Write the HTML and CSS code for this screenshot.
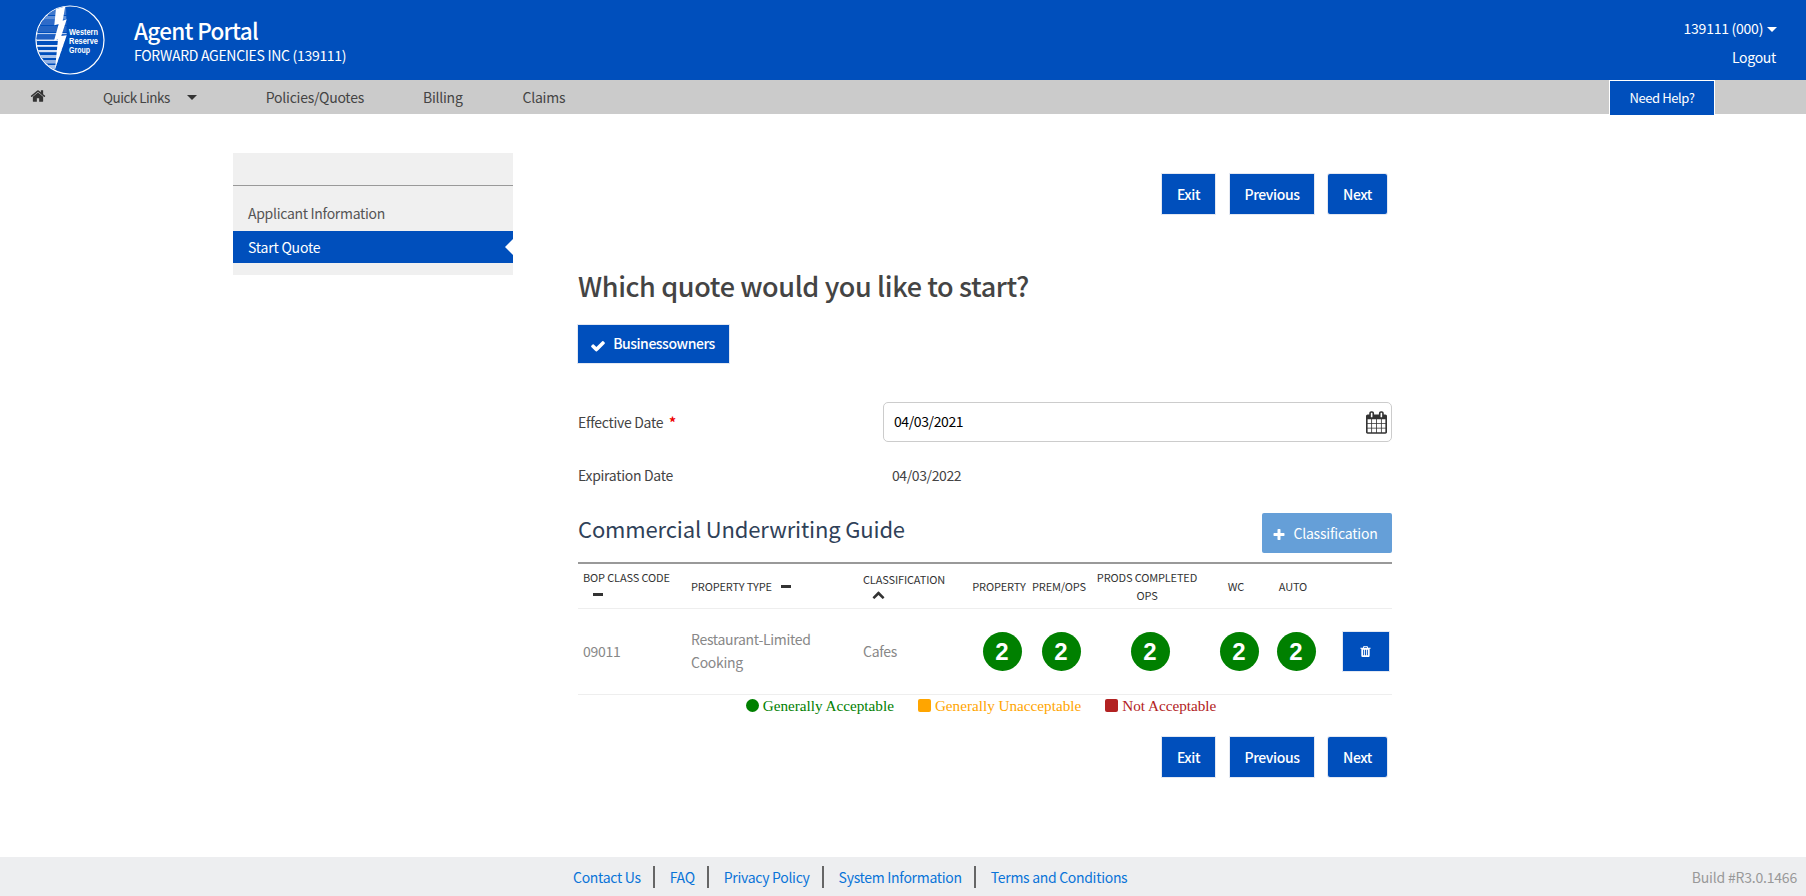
FILE: index.html
```html
<!DOCTYPE html>
<html lang="en">
<head>
<meta charset="utf-8">
<title>Agent Portal</title>
<link rel="stylesheet" href="styles.css">
</head>
<body>
<header class="top">
  <svg class="logo" viewBox="0 0 70 70" aria-hidden="true">
    <defs>
      <clipPath id="logoClip"><circle cx="35" cy="35" r="33.7"/></clipPath>
      <clipPath id="stripeClip"><polygon points="0,0 31,0 31.7,30 20,64.3 0,70"/></clipPath>
    </defs>
    <circle cx="35" cy="35" r="34" fill="#004fbc" stroke="#fff" stroke-width="1.2"/>
    <g clip-path="url(#logoClip)">
      <g clip-path="url(#stripeClip)">
        <rect x="0" y="2" width="32" height="8" fill="#3f78cc"/>
        <rect x="0" y="11" width="32" height="3.500" fill="#5f8fd8"/>
        <rect x="0" y="15" width="32" height="5" fill="#2f6bc8"/>
        <rect x="0" y="21" width="32" height="6" fill="#2565c4"/>
        <rect x="0" y="28" width="32" height="1.200" fill="#b9cdee"/>
        <rect x="0" y="30" width="32" height="4" fill="#1f5fc2"/>
        <rect x="0" y="34.500" width="32" height="1.500" fill="#dfe8f7"/>
        <rect x="0" y="40" width="32" height="1.800" fill="#e6edf9"/>
        <rect x="0" y="45" width="32" height="2.200" fill="#d5e1f5"/>
        <rect x="0" y="50" width="32" height="3" fill="#a9c3ea"/>
        <rect x="0" y="55" width="32" height="3.500" fill="#8fb0e4"/>
        <rect x="0" y="60" width="32" height="4" fill="#a9c3ea"/>
      </g>
      <polygon points="21,3.300 30.300,1 27.700,15.700 31.700,14.300 26.300,31 31.700,30.300 20,64.300 23,34.300 19,35.700 23.700,19 19.300,20.300" fill="#fff"/>
    </g>
    <text class="logo-text" x="34" y="30" textLength="29" lengthAdjust="spacingAndGlyphs">Western</text>
    <text class="logo-text" x="34" y="39" textLength="29" lengthAdjust="spacingAndGlyphs">Reserve</text>
    <text class="logo-text" x="34" y="48" textLength="21" lengthAdjust="spacingAndGlyphs">Group</text>
  </svg>
  <div class="brand">
    <div class="brand-title">Agent Portal</div>
    <div class="brand-sub">FORWARD AGENCIES INC (139111)</div>
  </div>
  <div class="account">
    <div class="account-id">139111 (000) <span class="caret caret-white"></span></div>
    <div class="logout">Logout</div>
  </div>
</header>

<nav class="nav">
  <svg class="home" viewBox="0 0 1792 1792" aria-hidden="true"><path d="M1472 992v480q0 26-19 45t-45 19h-384v-384h-256v384h-384q-26 0-45-19t-19-45v-480q0-1 .5-3t.5-3l575-474 575 474q1 2 1 6zm223-69l-62 74q-8 9-21 11h-3q-13 0-21-7l-692-577-692 577q-12 8-24 7-13-2-21-11l-62-74q-8-10-7-23.5t11-21.5l719-599q32-26 76-26t76 26l244 204v-195q0-14 9-23t23-9h192q14 0 23 9t9 23v408l219 182q10 8 11 21.5t-7 23.5z"/></svg>
  <span class="nav-quick">Quick Links</span>
  <span class="caret caret-dark"></span>
  <span class="nav-policies">Policies/Quotes</span>
  <span class="nav-billing">Billing</span>
  <span class="nav-claims">Claims</span>
  <span class="help">Need Help?</span>
</nav>

<div class="page">
  <aside class="side">
    <div class="side-head"></div>
    <div class="side-item">Applicant Information</div>
    <div class="side-active">Start Quote</div>
  </aside>

  <main class="main">
    <div class="actions">
      <button class="btn btn-exit">Exit</button>
      <button class="btn btn-prev">Previous</button>
      <button class="btn btn-next">Next</button>
    </div>

    <h1 class="title">Which quote would you like to start?</h1>

    <button class="btn btn-check">
      <svg class="ico-check" viewBox="0 0 1792 1792" aria-hidden="true"><path d="M1671 566q0 40-28 68l-724 724-136 136q-28 28-68 28t-68-28l-136-136-362-362q-28-28-28-68t28-68l136-136q28-28 68-28t68 28l294 295 656-657q28-28 68-28t68 28l136 136q28 28 28 68z"/></svg>
      Businessowners
    </button>

    <div class="field field-eff">
      <div class="field-label">Effective Date <span class="req">*</span></div>
      <div class="date-input">
        <span>04/03/2021</span>
        <svg class="ico-cal" viewBox="0 0 1664 1792" aria-hidden="true"><path d="M128 1664h288v-288h-288v288zm352 0h320v-288h-320v288zm-352-352h288v-320h-288v320zm352 0h320v-320h-320v320zm-352-384h288v-288h-288v288zm736 736h320v-288h-320v288zm-384-736h320v-288h-320v288zm768 736h288v-288h-288v288zm-384-352h320v-320h-320v320zm-352-864v-288q0-13-9.500-22.500t-22.500-9.500h-64q-13 0-22.500 9.500t-9.500 22.500v288q0 13 9.500 22.500t22.500 9.500h64q13 0 22.500-9.500t9.500-22.500zm736 864h288v-320h-288v320zm-384-384h320v-288h-320v288zm384 0h288v-288h-288v288zm32-480v-288q0-13-9.500-22.500t-22.500-9.500h-64q-13 0-22.500 9.500t-9.500 22.500v288q0 13 9.500 22.500t22.500 9.500h64q13 0 22.500-9.500t9.500-22.500zm384-64v1280q0 52-38 90t-90 38h-1408q-52 0-90-38t-38-90v-1280q0-52 38-90t90-38h128v-96q0-66 47-113t113-47h64q66 0 113 47t47 113v96h384v-96q0-66 47-113t113-47h64q66 0 113 47t47 113v96h128q52 0 90 38t38 90z"/></svg>
      </div>
    </div>

    <div class="field field-exp">
      <div class="field-label">Expiration Date</div>
      <div class="field-value">04/03/2022</div>
    </div>

    <div class="guide-head">
      <h2 class="guide-title">Commercial Underwriting Guide</h2>
      <button class="btn btn-class">
        <svg class="ico-plus" viewBox="0 0 1792 1792" aria-hidden="true"><path d="M1600 736v192q0 40-28 68t-68 28h-416v416q0 40-28 68t-68 28h-192q-40 0-68-28t-28-68v-416h-416q-40 0-68-28t-28-68v-192q0-40 28-68t68-28h416v-416q0-40 28-68t68-28h192q40 0 68 28t28 68v416h416q40 0 68 28t28 68z"/></svg>
        Classification
      </button>
    </div>

    <table class="grid">
      <colgroup>
        <col class="c1"><col class="c2"><col class="c3"><col class="c4"><col class="c5"><col class="c6"><col class="c7"><col class="c8"><col class="c9">
      </colgroup>
      <thead>
        <tr>
          <th class="left">BOP CLASS CODE<br><span class="dash dash-under"></span></th>
          <th class="left">PROPERTY TYPE <span class="dash dash-inline"></span></th>
          <th class="left">CLASSIFICATION<br><svg class="ico-chev" viewBox="0 0 1792 1792" aria-hidden="true"><path d="M1683 1331l-166 165q-19 19-45 19t-45-19l-531-531-531 531q-19 19-45 19t-45-19l-166-165q-19-19-19-45.500t19-45.500l742-741q19-19 45-19t45 19l742 741q19 19 19 45.500t-19 45.500z"/></svg></th>
          <th>PROPERTY</th>
          <th class="th-prem">PREM/OPS</th>
          <th>PRODS COMPLETED OPS</th>
          <th>WC</th>
          <th>AUTO</th>
          <th></th>
        </tr>
      </thead>
      <tbody>
        <tr>
          <td class="left">09011</td>
          <td class="left">Restaurant-Limited Cooking</td>
          <td class="left">Cafes</td>
          <td><span class="dot">2</span></td>
          <td><span class="dot">2</span></td>
          <td><span class="dot">2</span></td>
          <td><span class="dot">2</span></td>
          <td><span class="dot">2</span></td>
          <td class="trash-cell">
            <button class="btn btn-trash" aria-label="Delete">
              <svg class="ico-trash" viewBox="0 0 1408 1792" aria-hidden="true"><path fill="#fff" d="M512 1376v-704q0-14-9-23t-23-9h-64q-14 0-23 9t-9 23v704q0 14 9 23t23 9h64q14 0 23-9t9-23zm256 0v-704q0-14-9-23t-23-9h-64q-14 0-23 9t-9 23v704q0 14 9 23t23 9h64q14 0 23-9t9-23zm256 0v-704q0-14-9-23t-23-9h-64q-14 0-23 9t-9 23v704q0 14 9 23t23 9h64q14 0 23-9t9-23zm-544-992h448l-48-117q-7-9-17-11h-317q-10 2-17 11zm928 32v64q0 14-9 23t-23 9h-96v948q0 83-47 143.500t-113 60.500h-832q-66 0-113-58.500t-47-141.500v-952h-96q-14 0-23-9t-9-23v-64q0-14 9-23t23-9h309l70-167q15-37 54-63t79-26h320q40 0 79 26t54 63l70 167h309q14 0 23 9t9 23z"/></svg>
            </button>
          </td>
        </tr>
      </tbody>
    </table>

    <div class="legend">
      <span class="leg leg-green"><i class="sw sw-round"></i>Generally Acceptable</span>
      <span class="leg leg-orange"><i class="sw"></i>Generally Unacceptable</span>
      <span class="leg leg-red"><i class="sw"></i>Not Acceptable</span>
    </div>

    <div class="actions actions-bottom">
      <button class="btn btn-exit">Exit</button>
      <button class="btn btn-prev">Previous</button>
      <button class="btn btn-next">Next</button>
    </div>
  </main>
</div>

<footer class="foot">
  <div class="foot-links">
    <a>Contact Us</a><a>FAQ</a><a>Privacy Policy</a><a>System Information</a><a>Terms and Conditions</a>
  </div>
  <div class="build">Build #R3.0.1466</div>
</footer>
</body>
</html>
```
FILE: styles.css
```css
* { box-sizing: border-box; }
html, body { height: 100%; }
body {
  margin: 0;
  height: 896px;
  overflow: hidden;
  display: flex;
  flex-direction: column;
  background: #fff;
  color: #444;
  font-family: "Noto Sans CJK SC", "Noto Sans", sans-serif;
  font-size: 14px;
  line-height: 20px;
  letter-spacing: -0.3px;
}
.top {
  height: 80px;
  flex: none;
  display: flex;
  align-items: center;
  background: #004fbc;
  color: #fff;
  padding-left: 35px;
}
.logo { width: 70px; height: 70px; flex: none; }
.logo-text { fill: #fff; font-family: "Liberation Sans", sans-serif; font-size: 9px; font-weight: 700; letter-spacing: 0; }
.brand { margin-left: 29px; }
.brand-title { font-size: 22.5px; line-height: 30px; font-weight: 500; letter-spacing: -0.7px; margin-top: -1px; }
.brand-sub { font-size: 14px; line-height: 20px; margin-top: 0; }
.account { margin-left: auto; padding-right: 30px; text-align: right; }
.account-id { line-height: 20px; margin-top: 5px; letter-spacing: -0.25px; }
.logout { line-height: 20px; margin-top: 9px; }
.caret { display: inline-block; width: 0; height: 0; border-left: 5px solid transparent; border-right: 5px solid transparent; border-top: 5px solid; }
.caret-white { color: #fff; margin-left: 1px; margin-right: -1px; vertical-align: 2px; }
.caret-dark { color: #333; margin-left: 17px; vertical-align: 0; }

.nav {
  height: 34px;
  flex: none;
  background: #cbcbcb;
  display: flex;
  align-items: center;
  padding-left: 30px;
  color: #444;
  letter-spacing: -0.25px;
}
.home { width: 16px; height: 16px; fill: #333; margin-top: -3px; }
.nav-quick { margin-left: 57px; font-size: 13.5px; letter-spacing: -0.5px; }
.nav-policies { margin-left: 69px; }
.nav-billing { margin-left: 59px; }
.nav-claims { margin-left: 60px; }
.help {
  margin-left: auto;
  margin-right: 91px;
  width: 106px;
  height: 35px;
  align-self: flex-start;
  background: #004fbc;
  border: 1px solid #fff;
  border-bottom: 0;
  color: #fff;
  font-size: 13px;
  letter-spacing: -0.4px;
  display: flex;
  align-items: center;
  justify-content: center;
}

.page { flex: 1; display: flex; padding-left: 233px; }
.side { width: 280px; height: 122px; margin-top: 39px; background: #f0f0f0; flex: none; }
.side-head { height: 33px; border-bottom: 1px solid #999; }
.side-item { height: 45px; padding: 17px 15px 0; color: #555; }
.side-active {
  height: 32px;
  padding: 6px 15px 0;
  background: #004fbc;
  color: #fff;
  letter-spacing: -0.2px;
  position: relative;
}
.side-active::after {
  content: "";
  position: absolute;
  right: 0;
  top: 8px;
  border-top: 8px solid transparent;
  border-bottom: 8px solid transparent;
  border-right: 8px solid #fff;
}

.main { width: 814px; margin-left: 65px; padding-top: 60px; }
.actions { display: flex; justify-content: flex-end; gap: 14px; padding-right: 5px; }
.actions-bottom { margin-top: 21px; }
.btn {
  border: 0;
  margin: 0;
  padding: 0;
  background: #004fbc;
  color: #fff;
  font: inherit;
  letter-spacing: -0.4px;
  font-weight: 500;
  height: 40px;
  box-shadow: 0 0 0 1px #e3e8f2;
  display: inline-flex;
  align-items: center;
  justify-content: center;
}
.btn-exit { width: 53px; margin-right: 1px; }
.btn-prev { width: 84px; }
.btn-next { width: 59px; border-radius: 2px; }

.title { margin: 52px 0 0; font-size: 27px; line-height: 40px; font-weight: 500; letter-spacing: -0.38px; color: #444; }
.btn-check { width: 151px; height: 38px; margin-top: 19px; gap: 7px; line-height: 18px; padding: 0 2px 2px 0; letter-spacing: -0.45px; }
.ico-check { width: 16px; height: 16px; fill: #fff; margin-top: 5px; }

.field { display: flex; align-items: center; }
.field-eff { margin-top: 39px; }
.field-exp { margin-top: 23px; }
.field-label { width: 305px; color: #444; }
.req { color: #e00; margin-left: 3px; font-weight: 700; }
.field-value { color: #444; margin-left: 9px; letter-spacing: -0.4px; }
.date-input {
  width: 509px;
  height: 40px;
  border: 1.5px solid #ccc;
  border-radius: 5px;
  display: flex;
  align-items: center;
  justify-content: space-between;
  padding: 0 0 2px 10px;
  color: #000;
  letter-spacing: -0.4px;
}
.ico-cal { width: 21px; height: 23px; fill: #333; margin: 2px 4px 0 0; }

.guide-head { display: flex; justify-content: space-between; align-items: center; margin-top: 28px; }
.guide-title { margin: -11px 0 0; font-size: 22px; line-height: 34px; font-weight: 400; letter-spacing: -0.15px; color: #2f4158; }
.btn-class {
  width: 130px;
  background: #659fd8;
  border-radius: 2px;
  box-shadow: none;
  font-weight: 400;
  font-size: 14px;
  letter-spacing: -0.2px;
  gap: 7px;
  padding-right: 4px;
}
.ico-plus { width: 14px; height: 14px; fill: #fff; margin-top: 3px; }

.grid {
  width: 814px;
  margin-top: 9px;
  table-layout: fixed;
  border-collapse: collapse;
  border-top: 2px solid #999;
}
.c1 { width: 108px; }
.c2 { width: 172px; }
.c3 { width: 108px; }
.c4 { width: 66px; }
.c5 { width: 52px; }
.c6 { width: 126px; }
.c7 { width: 52px; }
.c8 { width: 62px; }
.c9 { width: 68px; }
.grid th {
  height: 45px;
  padding: 0 5px;
  font-size: 11px;
  line-height: 18px;
  font-weight: 400;
  letter-spacing: -0.15px;
  color: #333;
  text-align: center;
  border-bottom: 1px solid #eee;
}
.grid th.th-prem { padding: 0; }
.grid th.left, .grid td.left { text-align: left; }
.grid td {
  height: 86px;
  padding: 0 5px;
  text-align: center;
  color: #888;
  line-height: 23px;
  border-bottom: 1px solid #eee;
}
.dash { display: inline-block; width: 10px; height: 3px; background: #333; }
.dash-under { margin-left: 10px; vertical-align: 4px; }
.dash-inline { margin-left: 7px; vertical-align: 3px; }
.ico-chev { display: block; width: 13px; height: 13px; fill: #333; margin-left: 9px; }
.dot {
  display: flex;
  align-items: center;
  justify-content: center;
  width: 39px;
  height: 39px;
  margin: 0 auto;
  position: relative;
  left: 3px;
  border-radius: 50%;
  background: #008000;
  color: #fff;
  font-family: "Liberation Sans", sans-serif;
  font-size: 24px;
  font-weight: 700;
  letter-spacing: 0;
}
.trash-cell { padding: 0 !important; }
.btn-trash { width: 46px; height: 39px; margin-left: 15px; }
.ico-trash { width: 11px; height: 13px; }

.legend {
  display: flex;
  justify-content: center;
  gap: 24px;
  margin-top: 1px;
  padding-right: 8px;
  font-family: "Liberation Serif", serif;
  font-size: 15.2px;
  line-height: 20px;
  letter-spacing: 0;
}
.leg { display: inline-flex; align-items: center; }
.sw { display: inline-block; width: 13px; height: 13px; border-radius: 2px; margin-right: 4px; background: currentColor; }
.sw-round { border-radius: 50%; }
.leg-green { color: #008000; }
.leg-orange { color: #ffa500; }
.leg-red { color: #b22222; }

.foot {
  height: 39px;
  flex: none;
  background: #edeef0;
  display: flex;
  align-items: center;
  padding-left: 573px;
  padding-right: 9px;
}
.foot-links { display: flex; color: #0a74d8; font-size: 14px; letter-spacing: -0.3px; }
.foot-links a { padding: 0 12px 0 15px; border-right: 2px solid #666; line-height: 22px; }
.foot-links a:first-child { padding-left: 0; }
.foot-links a:last-child { border-right: 0; }
.build { margin-left: auto; color: #999; letter-spacing: -0.2px; }
```
